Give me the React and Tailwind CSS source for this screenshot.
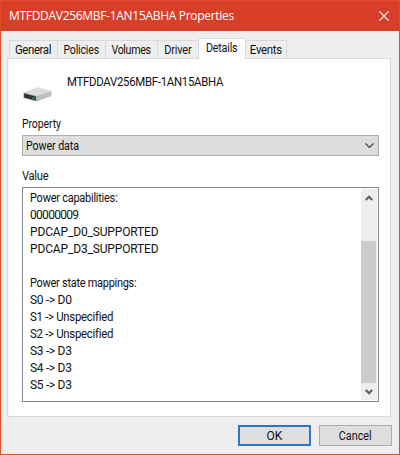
const tabs = [
  ['General', 'w-[48px]', 'h-[18px]', 'tracking-[-0.4px] scale-x-95'],
  ['Policies', 'w-[48px]', 'h-[18px]', 'tracking-[-0.2px] scale-x-[0.88]'],
  ['Volumes', 'w-[52px]', 'h-[18px]', 'tracking-[-0.4px] scale-x-[0.89]'],
  ['Driver', 'w-[41px]', 'h-[18px]', 'tracking-[-0.2px] scale-x-[0.91]'],
  ['Details', 'w-[48px]', 'h-[21px]', 'tracking-[-0.2px] scale-x-[0.89]'],
  ['Events', 'w-[41px]', 'h-[18px]', 'tracking-[-0.3px] scale-x-95'],
];

const lines = [
  ['Power capabilities:', 'tracking-[-0.3px] scale-x-[0.92]'],
  ['00000009', 'tracking-[-0.7px]'],
  ['PDCAP_D0_SUPPORTED', 'tracking-[-0.15px]'],
  ['PDCAP_D3_SUPPORTED', 'tracking-[-0.15px]'],
  ['', ''],
  ['Power state mappings:', 'tracking-[-0.3px] scale-x-[0.915]'],
  ['S0 -> D0', 'tracking-[-0.3px]'],
  ['S1 -> Unspecified', 'tracking-[-0.3px] scale-x-95'],
  ['S2 -> Unspecified', 'tracking-[-0.3px] scale-x-95'],
  ['S3 -> D3', 'tracking-[-0.3px]'],
  ['S4 -> D3', 'tracking-[-0.3px]'],
  ['S5 -> D3', 'tracking-[-0.3px]'],
];

function DriveIcon() {
  return (
    <svg className="block h-[15px] w-[29px]" viewBox="0 0 29 15">
      <path d="M.5 5.5 14 .5Q15 0 16 .4L28.5 4 14 9Z" fill="#dcdcdc" />
      <path d="M13.5 9 28.5 4v5l-15 5.5Z" fill="#bdbdbd" />
      <path d="M.5 5.5 13.5 9v5.5L.5 11Z" fill="#9a9a9a" />
      <path d="M1.2 6.5 12.8 9.5v4L1.2 10.4Z" fill="#303030" />
      <path d="M9.5 10.2h2.2v1.8H9.5Z" fill="#27a35a" />
    </svg>
  );
}

export default function App() {
  return (
    <div className="flex h-[455px] w-[400px] flex-col overflow-hidden border border-[#dd4b27] bg-[#eeeeee] font-[Roboto,sans-serif] text-[12px] text-[#111]">
      <header className="flex h-[30px] shrink-0 items-center justify-between bg-[#d83f28] pr-[10px] pl-[8px] text-white">
        <h1 className="whitespace-nowrap font-['Open_Sans',sans-serif] text-[12px] leading-[16px] tracking-[-0.3px]">MTFDDAV256MBF-1AN15ABHA Properties</h1>
        <svg className="-mt-px h-[10px] w-[10px]" viewBox="0 0 10 10" stroke="white" strokeWidth="1.1"><path d="M.4.4l9.2 9.2M9.6.4.4 9.6" /></svg>
      </header>
      <nav className="mt-[7px] flex h-[20px] shrink-0 items-end pl-[8px]">
        {tabs.map(([name, width, height, tracking]) => (
          <div
            key={name}
            className={`${width} ${height} flex shrink-0 justify-center border-t border-[#d9d9d9] leading-[18px] ${name === 'Details' ? 'relative z-10 -mb-px border-x bg-white pr-[1px]' : name === 'Events' ? 'border-r' : 'border-l'}`}
          >
            <span className={tracking + ' inline-block'}>{name}</span>
          </div>
        ))}
      </nav>
      <main className="ml-[6px] h-[359px] w-[384px] shrink-0 border border-[#d9d9d9] bg-white pr-[11px] pl-[14px]">
        <div className="flex h-[57px] pt-[14px]">
          <div className="mt-[14px] ml-[1px]"><DriveIcon /></div>
          <div className="ml-[15px] origin-left scale-x-95 leading-[18px] tracking-[-0.3px]">MTFDDAV256MBF-1AN15ABHA</div>
        </div>
        <div className="h-[19px] origin-left scale-x-[0.87] leading-[16px] tracking-[-0.1px]">Property</div>
        <div className="flex h-[21px] w-[357px] items-center justify-between border border-[#adadad] bg-[#dddddd] pr-[4px] pl-[3px]">
          <span className="origin-left scale-x-[0.89] tracking-[-0.1px]">Power data</span>
          <svg className="h-[5px] w-[9px]" viewBox="0 0 9 5" fill="none" stroke="#444" strokeWidth="1.2"><path d="M.5.5l4 4 4-4" /></svg>
        </div>
        <div className="mt-[12px] h-[19px] origin-left scale-x-[0.93] leading-[16px] tracking-[-0.3px]">Value</div>
        <div className="flex h-[215px] w-[357px] justify-between border border-[#828790]">
          <div className="pt-[2px] pl-[7px]">
            {lines.map(([text, tracking], i) => (
              <div key={i} className="h-[17px] leading-[17px]"><span className={tracking + ' inline-block origin-left'}>{text}</span></div>
            ))}
          </div>
          <div className="my-px mr-px flex w-[16px] flex-col bg-[#eeeeee]">
            <div className="flex h-[52px] justify-center pt-[6px]">
              <svg className="h-[6px] w-[8px]" viewBox="0 0 8 6" fill="none" stroke="#606060" strokeWidth="2.2"><path d="M.8 5 4 1.8 7.2 5" /></svg>
            </div>
            <div className="h-[142px] w-[15px] bg-[#cccccc]" />
            <div className="flex flex-1 justify-center pt-[6px]">
              <svg className="h-[6px] w-[8px]" viewBox="0 0 8 6" fill="none" stroke="#606060" strokeWidth="2.2"><path d="M.8 1 4 4.2 7.2 1" /></svg>
            </div>
          </div>
        </div>
      </main>
      <footer className="mt-[8px] mr-[7px] flex justify-end gap-[8px]">
        <button className="h-[21px] w-[73px] border-2 border-[#2c78c0] bg-[#dedede] pt-px leading-[17px]">OK</button>
        <button className="h-[21px] w-[73px] border border-[#adadad] bg-[#dedede] pt-px leading-[19px]"><span className="inline-block scale-x-90">Cancel</span></button>
      </footer>
    </div>
  );
}
